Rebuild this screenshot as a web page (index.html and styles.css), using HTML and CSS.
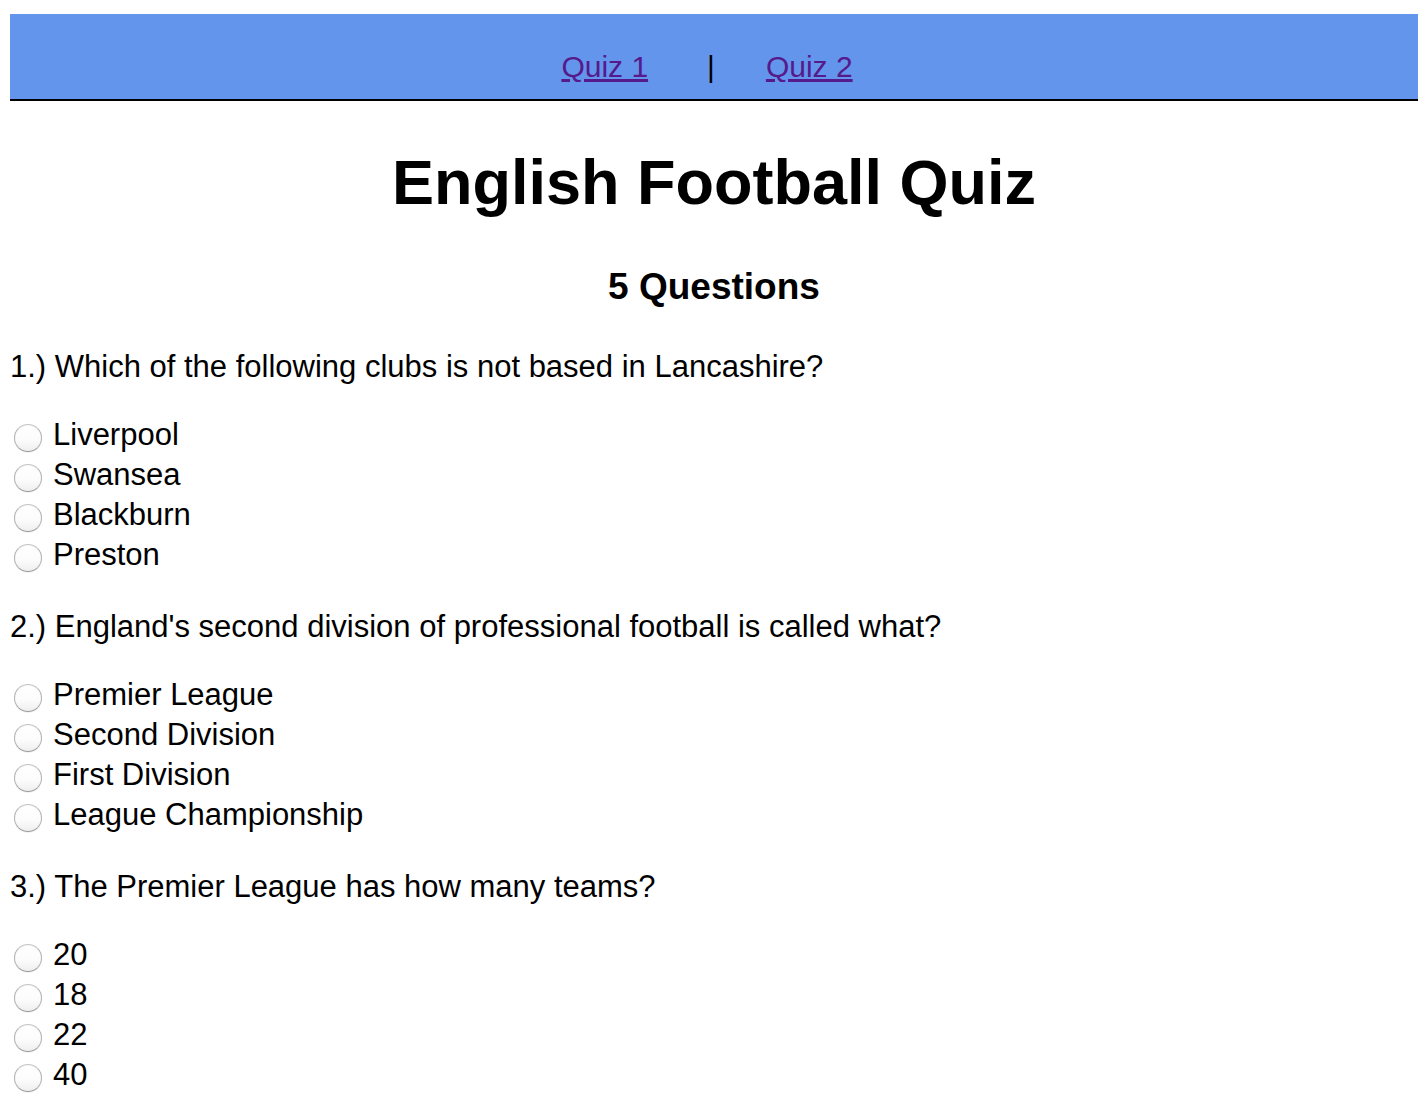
FILE: index.html
```html
<!DOCTYPE html>
<html lang="en">
<head>
<meta charset="utf-8">
<title>English Football Quiz</title>
<link rel="stylesheet" href="styles.css">
</head>
<body>
<nav class="nav">
  <a class="nav-link" href="#quiz1">Quiz 1</a>
  <span class="nav-sep">|</span>
  <a class="nav-link nav-link-2" href="#quiz2">Quiz 2</a>
</nav>
<h1 class="title">English Football Quiz</h1>
<h3 class="subtitle">5 Questions</h3>
<form class="quiz">
  <div class="block">
    <p class="question">1.) Which of the following clubs is not based in Lancashire?</p>
    <label class="option"><input type="radio" name="q1" class="radio"><span>Liverpool</span></label>
    <label class="option"><input type="radio" name="q1" class="radio"><span>Swansea</span></label>
    <label class="option"><input type="radio" name="q1" class="radio"><span>Blackburn</span></label>
    <label class="option"><input type="radio" name="q1" class="radio"><span>Preston</span></label>
  </div>
  <div class="block">
    <p class="question">2.) England's second division of professional football is called what?</p>
    <label class="option"><input type="radio" name="q2" class="radio"><span>Premier League</span></label>
    <label class="option"><input type="radio" name="q2" class="radio"><span>Second Division</span></label>
    <label class="option"><input type="radio" name="q2" class="radio"><span>First Division</span></label>
    <label class="option"><input type="radio" name="q2" class="radio"><span>League Championship</span></label>
  </div>
  <div class="block">
    <p class="question">3.) The Premier League has how many teams?</p>
    <label class="option"><input type="radio" name="q3" class="radio"><span>20</span></label>
    <label class="option"><input type="radio" name="q3" class="radio"><span>18</span></label>
    <label class="option"><input type="radio" name="q3" class="radio"><span>22</span></label>
    <label class="option"><input type="radio" name="q3" class="radio"><span>40</span></label>
  </div>
</form>
</body>
</html>
```
FILE: styles.css
```css
html, body {
  background: #ffffff;
}
body {
  margin: 14px 8px 0 10px;
  font-family: "Liberation Sans", Arial, Helvetica, sans-serif;
  color: #000;
}
.nav {
  background: #6495ed;
  border-bottom: 2px solid #000;
  display: flex;
  justify-content: center;
  align-items: flex-start;
  padding: 33px 14px 0 0;
  box-sizing: border-box;
  height: 87px;
  font-size: 30px;
  line-height: 40px;
}
.nav-link {
  color: #551a8b;
  text-decoration: underline;
}
.nav-sep {
  margin: 0 51px 0 59px;
}
.title {
  margin: 44px 0 0 0;
  text-align: center;
  font-size: 63px;
  line-height: 74px;
  font-weight: bold;
}
.subtitle {
  margin: 46px 0 0 0;
  text-align: center;
  font-size: 37px;
  line-height: 44px;
  font-weight: bold;
}
.quiz {
  margin-top: 38px;
}
.block {
  margin-bottom: 32px;
}
.question {
  margin: 0 0 28px 0;
  font-size: 31px;
  line-height: 40px;
}
.option {
  display: flex;
  align-items: flex-start;
  height: 40px;
  font-size: 31px;
  line-height: 40px;
}
.radio {
  appearance: none;
  -webkit-appearance: none;
  width: 28px;
  height: 28px;
  margin: 9px 11px 0 4px;
  border-radius: 50%;
  border: 1px solid #b4b4b4;
  border-color: #c6c6c6 #b0b0b0 #9c9c9c #b0b0b0;
  background: linear-gradient(#ffffff 0%, #fcfcfc 55%, #efefef 100%);
  box-shadow: inset 0 1px 1px rgba(0, 0, 0, 0.04), 0 1px 0 rgba(0, 0, 0, 0.05);
  box-sizing: border-box;
  flex: none;
}
```
